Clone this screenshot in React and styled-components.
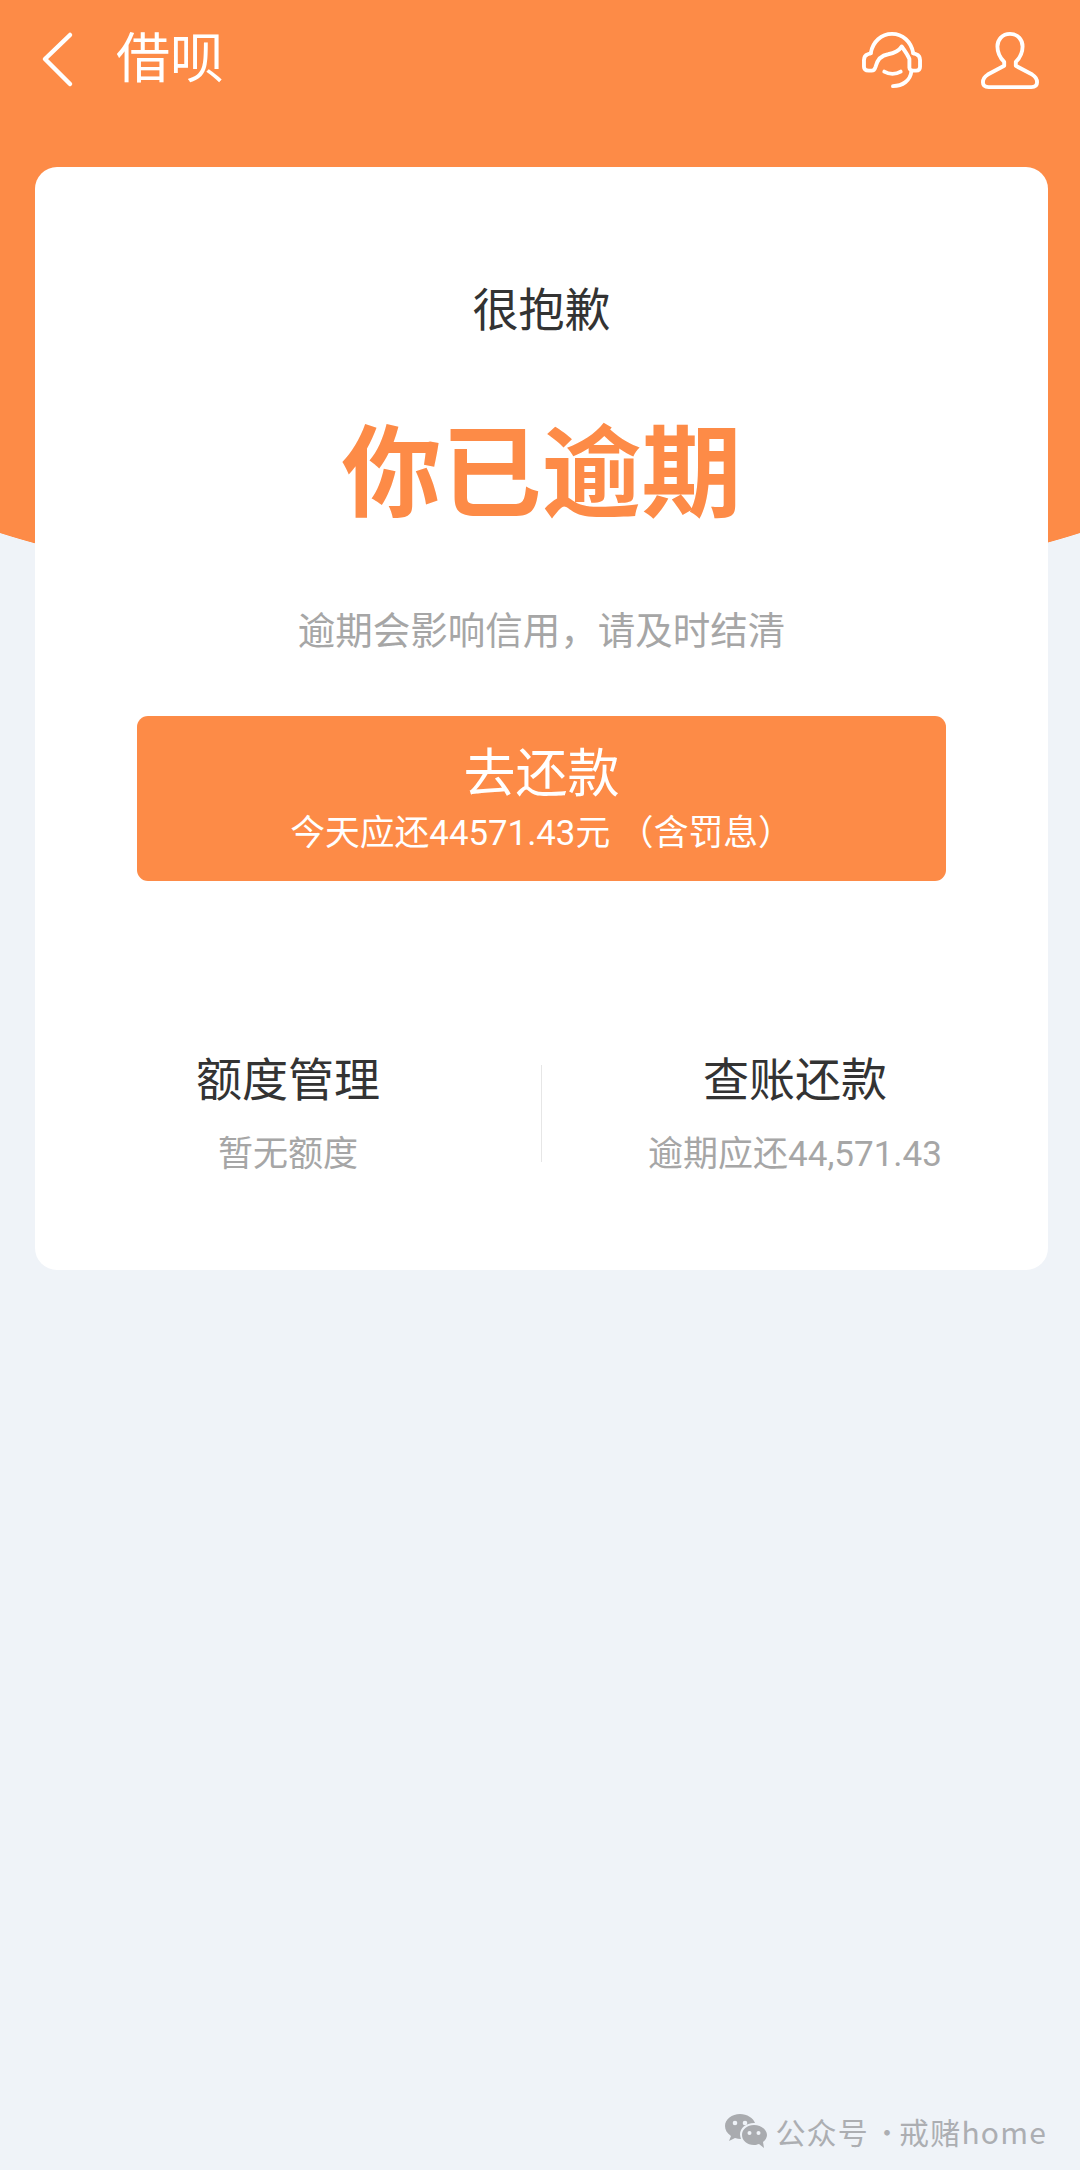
import styled, { createGlobalStyle } from 'styled-components'

const ORANGE = '#fd8b47'

const GlobalStyle = createGlobalStyle`
    html, body {
        margin: 0;
        padding: 0;
        background: #fff;
    }
    body {
        font-family: Roboto, "Noto Sans CJK SC", "Noto Sans", sans-serif;
    }
`
const Page = styled.div`
    box-sizing: border-box;
    width: 1080px;
    height: 2170px;
    display: flex;
    flex-direction: column;
    background:
        radial-gradient(ellipse 700px 183px at 540px 417px, ${ORANGE} 99.7%, transparent 100%),
        linear-gradient(${ORANGE}, ${ORANGE}) no-repeat 0 0 / 100% 417px,
        #eff3f8;
`
const TopBar = styled.header`
    height: 167px;
    flex: none;
    box-sizing: border-box;
    padding: 30px 40px 0 41px;
    display: flex;
    align-items: flex-start;
    color: #fff;
`
const BackButton = styled.svg`
    width: 34px;
    height: 60px;
    margin-top: 1px;
    flex: none;
`
const Title = styled.h1`
    margin: -9px 0 0 41px;
    font-size: 54px;
    line-height: 78px;
    font-weight: 400;
`
const BarIcons = styled.div`
    margin-left: auto;
    display: flex;
    gap: 58px;
    padding-top: 2px;
`
const BarIcon = styled.svg`
    width: 60px;
    height: 58px;
`
const Card = styled.main`
    box-sizing: border-box;
    margin: 0 32px 0 35px;
    height: 1103px;
    flex: none;
    background: #fff;
    border-radius: 22px;
    display: flex;
    flex-direction: column;
    align-items: center;
`
const Sorry = styled.div`
    margin-top: 110px;
    font-size: 46px;
    line-height: 66px;
    color: #333;
`
const Overdue = styled.div`
    margin-top: 60px;
    font-size: 100px;
    line-height: 144px;
    font-weight: 700;
    color: ${ORANGE};
`
const Notice = styled.div`
    margin-top: 57px;
    font-size: 37.5px;
    line-height: 54px;
    color: #a6a6a6;
`
const RepayButton = styled.button`
    box-sizing: border-box;
    margin-top: 58px;
    width: 809px;
    height: 165px;
    flex: none;
    padding: 23px 0 0;
    border: 0;
    border-radius: 11px;
    background: ${ORANGE};
    color: #fff;
    font-family: inherit;
    display: flex;
    flex-direction: column;
    align-items: center;
`
const RepayLabel = styled.span`
    font-size: 52px;
    line-height: 72px;
`
const RepayAmount = styled.span`
    margin-top: -3px;
    font-size: 34.8px;
    line-height: 50px;
`
const Stats = styled.div`
    width: 100%;
    margin-top: 166px;
    display: grid;
    grid-template-columns: 1fr 1px 1fr;
    align-items: center;
`
const Stat = styled.div`
    display: flex;
    flex-direction: column;
    align-items: center;
`
const StatTitle = styled.div`
    font-size: 46px;
    line-height: 66px;
    color: #333;
`
const StatNote = styled.div`
    margin-top: 17px;
    font-size: 35px;
    line-height: 50px;
    color: #a6a6a6;
`
const Divider = styled.div`
    height: 97px;
    background: #e6e6e6;
`
const Watermark = styled.footer`
    margin-top: auto;
    height: 44px;
    padding: 0 33px 17px 0;
    display: flex;
    justify-content: flex-end;
    align-items: center;
    font-family: "Noto Sans CJK SC", sans-serif;
    font-size: 30px;
    letter-spacing: 1.2px;
    color: #acaeb2;
`
const WechatIcon = styled.svg`
    width: 42px;
    height: 36px;
    margin-right: 8px;
`
const Dot = styled.span`
    width: 30px;
    text-align: left;
    padding-left: 3px;
    box-sizing: border-box;
    font-weight: 300;
`

export default function App() {
    return (
        <>
            <GlobalStyle />
            <Page>
                <TopBar>
                    <BackButton viewBox="0 0 34 60" fill="none" stroke="#fff" strokeWidth="4.5" strokeLinecap="round" strokeLinejoin="round">
                        <path d="M29 4 L4 28 L29 53" />
                    </BackButton>
                    <Title>借呗</Title>
                    <BarIcons>
                        <BarIcon viewBox="0 0 62 60" fill="none" stroke="#fff" strokeWidth="4" strokeLinecap="round" strokeLinejoin="round">
                            <path d="M9 22 C11 10 20 2 31 2 C42 2 51 10 53 22" />
                            <path d="M9 22 L6 23 C3 24 2 26 2 29 L2 36 C2 39 4 40 7 40 L10 40 C12 40 13 39 14 36 C16 28 20 24 27 23 C33 22 38 20 41 15 C44 19 47 23 49 28 L49 37 C49 39 51 40 53 40 L56 40 C59 40 60 38 60 36 L60 29 C60 26 59 24 56 23 L53 22" />
                            <path d="M23 41 C28 44 35 44 40 41" />
                            <path d="M51 41 C50 50 42 56 32 56" />
                        </BarIcon>
                        <BarIcon viewBox="0 0 62 60" fill="none" stroke="#fff" strokeWidth="4" strokeLinecap="round" strokeLinejoin="round">
                            <path d="M31 2 C23 2 18 8 18 15 C18 22 21 27 25 31 L25 35 L8 44 C3 47 3 50 3 52 C3 55 5 57 9 57 L53 57 C57 57 59 55 59 52 C59 50 59 47 54 44 L37 35 L37 31 C41 27 44 22 44 15 C44 8 39 2 31 2 Z" />
                        </BarIcon>
                    </BarIcons>
                </TopBar>
                <Card>
                    <Sorry>很抱歉</Sorry>
                    <Overdue>你已逾期</Overdue>
                    <Notice>逾期会影响信用，请及时结清</Notice>
                    <RepayButton>
                        <RepayLabel>去还款</RepayLabel>
                        <RepayAmount>今天应还44571.43元 （含罚息）</RepayAmount>
                    </RepayButton>
                    <Stats>
                        <Stat>
                            <StatTitle>额度管理</StatTitle>
                            <StatNote>暂无额度</StatNote>
                        </Stat>
                        <Divider />
                        <Stat>
                            <StatTitle>查账还款</StatTitle>
                            <StatNote>逾期应还44,571.43</StatNote>
                        </Stat>
                    </Stats>
                </Card>
                <Watermark>
                    <WechatIcon viewBox="0 0 42 36">
                        <path fill="#a9abaf" d="M15 1 C7 1 0 6 0 13 C0 17 2 20 6 23 L4 28 L10 25 C12 25.500 14 26 16 26 C15.500 24.500 15 23 15 21.500 C15 15 21 10 29 10 L30 10 C28.500 5 22 1 15 1 Z" />
                        <path fill="#a9abaf" d="M29 12 C22 12 17 16.500 17 22 C17 27.500 22 32 29 32 C31 32 32.500 31.500 34 31 L39 35 L38 29 C40.500 27 42 24.500 42 22 C42 16.500 36 12 29 12 Z" />
                        <g fill="#eff3f8">
                            <circle cx="10" cy="10" r="2.300" />
                            <circle cx="20" cy="10" r="2.300" />
                            <circle cx="24.500" cy="20" r="2" />
                            <circle cx="33.500" cy="20" r="2" />
                        </g>
                    </WechatIcon>
                    公众号<Dot>·</Dot>戒赌home
                </Watermark>
            </Page>
        </>
    )
}
